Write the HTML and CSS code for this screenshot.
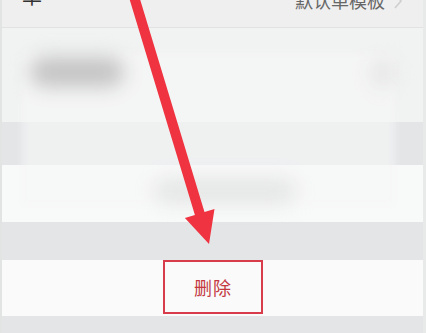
FILE: index.html
```html
<!DOCTYPE html>
<html lang="zh-CN">
<head>
    <meta charset="UTF-8">
    <meta name="viewport" content="width=device-width, initial-scale=1.0">
    <title>删除模板</title>
    <link rel="stylesheet" href="styles.css">
</head>
<body>
    <div class="screen">
        <div class="header">
            <span class="header-title">单</span>
            <span class="header-value">默认单模板
                <svg class="chevron" width="10" height="16" viewBox="0 0 10 16"><path d="M2 1 L8 8 L2 15" fill="none" stroke="#cfcfcf" stroke-width="1.6"/></svg>
            </span>
        </div>
        <div class="area-top"></div>
        <div class="band band-mid"></div>
        <div class="area-white"></div>
        <div class="band band-low"></div>
        <div class="delete-row">
            <button class="delete-btn">删除</button>
        </div>
        <div class="band band-end"></div>

        <!-- blurred preview sheet -->
        <div class="sheet">
            <div class="blob blob-name"></div>
            <div class="blob blob-side"></div>
            <div class="blob blob-foot"></div>
        </div>

        <!-- annotation arrow -->
        <svg class="arrow" width="426" height="333" viewBox="0 0 426 333">
            <polygon fill="#ef3340" points="138.3,-6.5 128.7,-3.6 194.9,214.9 184.9,217.9 209,244 214.5,208.9 204.5,211.9"/>
        </svg>
    </div>
</body>
</html>
```

FILE: styles.css
```css
* {
    box-sizing: border-box;
}
body {
    margin: 0;
    padding: 0;
    background-color: #f1f2f2;
    font-family: "Noto Sans CJK SC", "Noto Sans", sans-serif;
    overflow: hidden;
}
.screen {
    position: relative;
    width: 426px;
    height: 333px;
    overflow: hidden;
    border-left: 2px solid #e2e3e3;
    border-right: 3px solid #e8e9e9;
}
.header {
    display: flex;
    justify-content: space-between;
    align-items: flex-start;
    height: 28px;
    padding: 0 20px 0 20px;
    background-color: #efefef;
    border-bottom: 1px solid #e2e2e2;
}
.header-title {
    margin-top: -14px;
    font-size: 20px;
    line-height: 20px;
    color: #333333;
}
.header-value {
    display: flex;
    align-items: center;
    gap: 8px;
    margin-top: -9px;
    font-size: 18px;
    line-height: 18px;
    color: #666666;
}
.chevron {
    margin-top: 2px;
}
.area-top {
    height: 94px;
    background-color: #f1f2f2;
}
.band {
    background-color: #e3e5e7;
}
.band-mid {
    height: 43px;
}
.area-white {
    height: 57px;
    background-color: #f8f9f9;
}
.band-low {
    height: 38px;
}
.delete-row {
    display: flex;
    justify-content: center;
    height: 56px;
    background-color: #fafafa;
}
.delete-btn {
    width: 100px;
    height: 54px;
    margin-left: 1px;
    border: 2px solid #d83c4b;
    background: transparent;
    font-family: "Noto Sans CJK SC", sans-serif;
    font-size: 18px;
    color: #c4383f;
    letter-spacing: 1px;
    padding: 0;
}
.band-end {
    height: 20px;
}
.sheet {
    position: absolute;
    left: 20px;
    top: 53px;
    width: 373px;
    height: 152px;
    background-color: rgba(246, 247, 247, 0.6);
    filter: blur(3px);
}
.blob {
    position: absolute;
    border-radius: 16px;
    filter: blur(9px);
}
.blob-name {
    left: 8px;
    top: 4px;
    width: 94px;
    height: 30px;
    background-color: #c4c4c4;
}
.blob-side {
    left: 350px;
    top: 6px;
    width: 22px;
    height: 28px;
    background-color: #e4e4e4;
}
.blob-foot {
    left: 132px;
    top: 126px;
    width: 142px;
    height: 24px;
    background-color: #e4e5e5;
}
.arrow {
    position: absolute;
    left: -2px;
    top: 0;
}
```
